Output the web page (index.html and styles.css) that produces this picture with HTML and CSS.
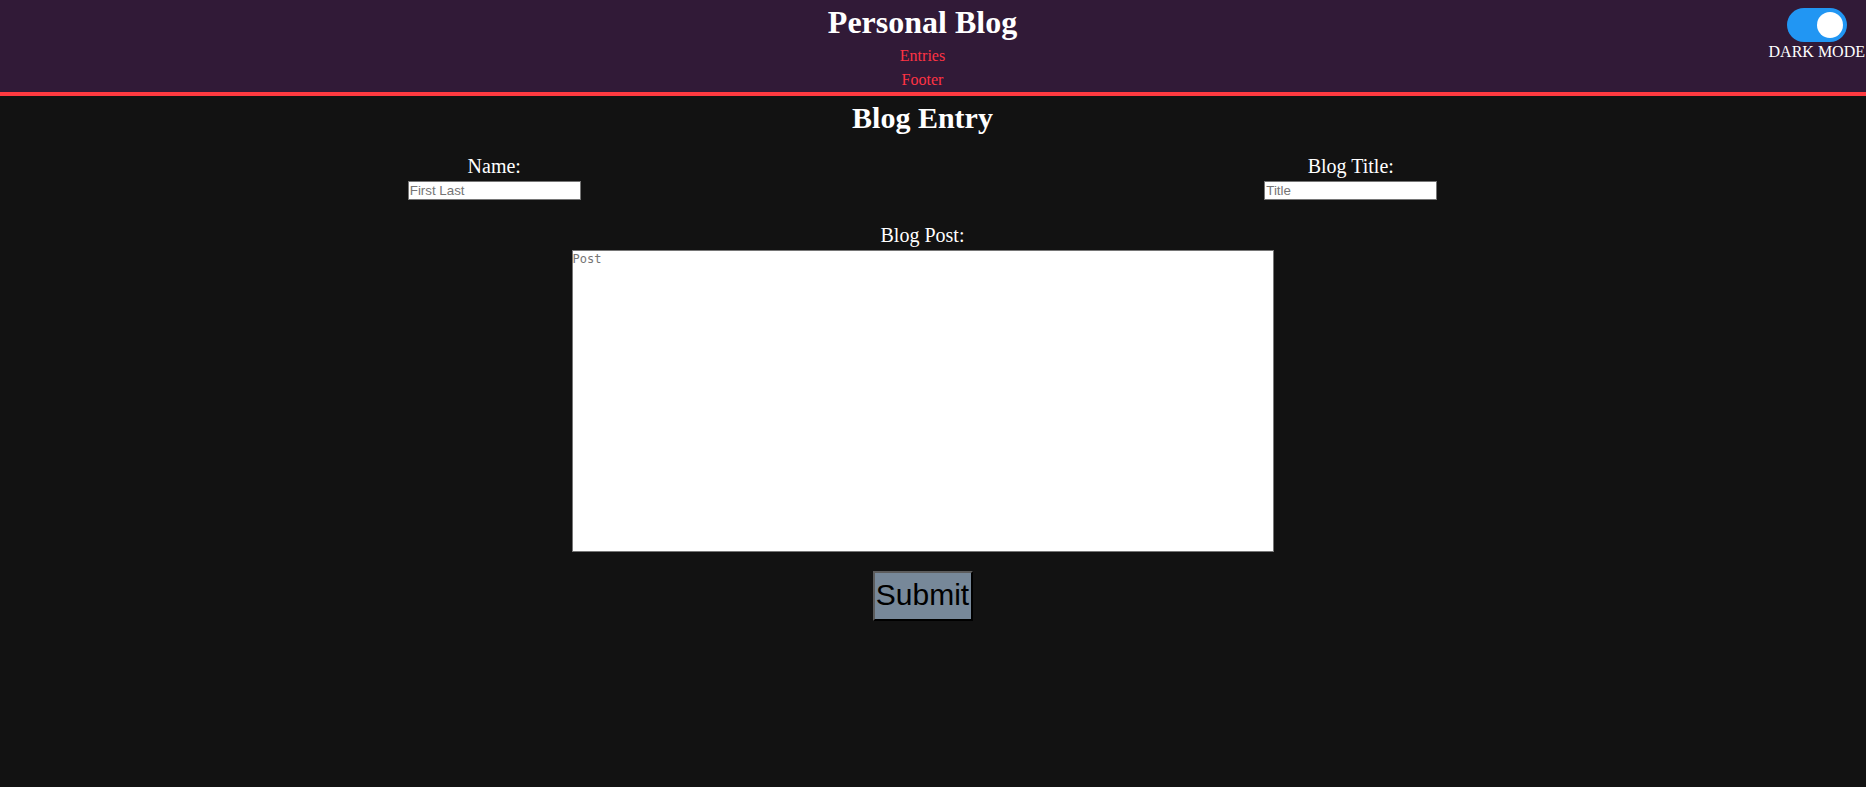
FILE: index.html
```html
<!DOCTYPE html>
<html lang="en">
<head>
<meta charset="utf-8">
<title>Personal Blog</title>
<link rel="stylesheet" href="styles.css">
</head>
<body>
<header class="site-header">
  <div class="brand">
    <h1 class="brand-title">Personal Blog</h1>
    <nav class="brand-nav">
      <a class="nav-link" href="#entries">Entries</a>
      <a class="nav-link" href="#footer">Footer</a>
    </nav>
  </div>
  <div class="mode">
    <label class="switch">
      <input class="switch-input" type="checkbox" checked>
      <span class="slider"></span>
    </label>
    <span class="mode-label">DARK MODE</span>
  </div>
</header>
<main class="entry">
  <h2 class="entry-title">Blog Entry</h2>
  <form class="entry-form">
    <div class="row">
      <div class="field">
        <label class="field-label" for="name">Name:</label>
        <input class="text-input" id="name" type="text" placeholder="First Last">
      </div>
      <div class="field">
        <label class="field-label" for="title">Blog Title:</label>
        <input class="text-input" id="title" type="text" placeholder="Title">
      </div>
    </div>
    <div class="field post-field">
      <label class="field-label" for="post">Blog Post:</label>
      <textarea class="post-input" id="post" placeholder="Post"></textarea>
    </div>
    <button class="submit" type="submit">Submit</button>
  </form>
</main>
</body>
</html>
```
FILE: styles.css
```css
html, body {
  margin: 0;
  padding: 0;
}
body {
  background: #121212;
  color: #ffffff;
  font-family: "Liberation Serif", "Times New Roman", serif;
  overflow: hidden;
  min-height: 787px;
}
.site-header {
  position: relative;
  background: #311a37;
  border-bottom: 4px solid #ff3a40;
  height: 92px;
  padding-right: 21px;
}
.brand {
  text-align: center;
}
.brand-title {
  margin: 0;
  font-size: 32px;
  line-height: 44px;
  font-weight: bold;
  color: #ffffff;
}
.brand-nav {
  display: flex;
  flex-direction: column;
  align-items: center;
}
.nav-link {
  font-size: 16px;
  line-height: 24px;
  color: #ff3344;
  text-decoration: none;
}
.mode {
  position: absolute;
  top: 8px;
  right: 1px;
  display: flex;
  flex-direction: column;
  align-items: center;
}
.switch {
  position: relative;
  display: block;
  width: 60px;
  height: 34px;
}
.switch-input {
  opacity: 0;
  width: 0;
  height: 0;
  margin: 0;
}
.slider {
  position: absolute;
  inset: 0;
  background: #2196f3;
  border-radius: 34px;
}
.slider::before {
  content: "";
  position: absolute;
  width: 26px;
  height: 26px;
  left: 30px;
  top: 4px;
  background: #ffffff;
  border-radius: 50%;
}
.mode-label {
  margin-top: 1px;
  font-size: 16px;
  line-height: 18px;
  white-space: nowrap;
  color: #ffffff;
}
.entry {
  margin-right: 21px;
  text-align: center;
}
.entry-title {
  margin: 5px 0 0;
  font-size: 30px;
  line-height: 34px;
  font-weight: bold;
}
.entry-form {
  display: flex;
  flex-direction: column;
  align-items: center;
}
.row {
  align-self: stretch;
  display: grid;
  grid-template-columns: 1fr 1fr;
  padding: 0 66px;
  margin-top: 20px;
}
.field {
  display: flex;
  flex-direction: column;
  align-items: center;
}
.field-label {
  font-size: 20px;
  line-height: 23px;
  color: #ffffff;
}
.text-input {
  box-sizing: border-box;
  width: 173px;
  height: 19px;
  margin-top: 3px;
  padding: 1px;
  border: 1px solid #767676;
  background: #ffffff;
  font-family: "Liberation Sans", Arial, sans-serif;
  font-size: 13.33px;
  color: #000;
}
.text-input::placeholder {
  color: #757575;
}
.post-field {
  margin-top: 24px;
}
.post-input {
  box-sizing: border-box;
  width: 702px;
  height: 302px;
  margin: 3px 0 0;
  padding: 1px 0;
  border: 1px solid #767676;
  background: #ffffff;
  font-family: "DejaVu Sans Mono", "Liberation Mono", monospace;
  font-size: 12px;
  resize: none;
}
.post-input::placeholder {
  color: #757575;
}
.submit {
  box-sizing: border-box;
  width: 100px;
  height: 50px;
  margin-top: 19px;
  padding: 0 0 2px;
  background: #778899;
  border: 2px solid;
  border-color: #5c5c5c #000000 #000000 #5c5c5c;
  font-family: "Liberation Sans", Arial, sans-serif;
  font-size: 30px;
  color: #000000;
}
```
